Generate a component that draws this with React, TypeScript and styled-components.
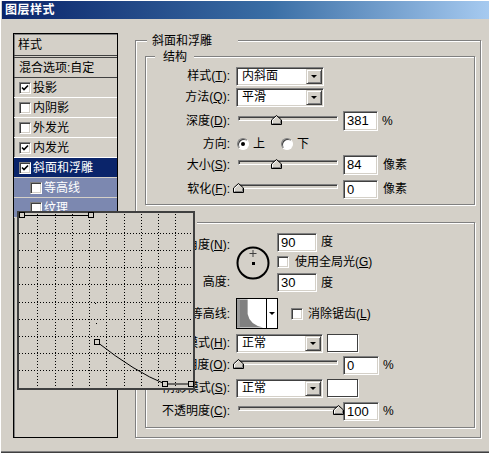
import React from 'react'
import styled, { createGlobalStyle } from 'styled-components'

const FONT = `'Liberation Sans', 'Noto Sans CJK SC', sans-serif`

const GlobalStyle = createGlobalStyle`
  html, body {
    margin: 0;
    padding: 0;
    background: #d4d0c8;
  }
  body {
    font-family: ${FONT};
    font-size: 12px;
    color: #000;
  }
`

const Window = styled.div`
  position: relative;
  width: 489px;
  height: 453px;
  box-sizing: border-box;
  padding: 1px 0 0 2px;
  background: #d4d0c8;
  overflow: hidden;
  box-shadow: inset 1px 1px 0 #fff, inset 0 -1px 0 #404040, inset 0 -2px 0 #808080;
`

const TitleBar = styled.div`
  height: 18px;
  padding-left: 3px;
  background: linear-gradient(to right, #0a246a 0%, #3a6ea5 55%, #a6caf0 100%);
  color: #fff;
  font-weight: bold;
  font-size: 12px;
  letter-spacing: 0.5px;
  line-height: 18px;
`

const Body = styled.div`
  display: flex;
  align-items: flex-start;
  padding: 14px 0 0 11px;
`

/* ---------- left style list ---------- */

const ListBox = styled.div`
  width: 105px;
  height: 405px;
  flex: none;
  box-sizing: border-box;
  border: 1px solid #000;
  box-shadow: inset 1px 1px 0 #808080;
  overflow: hidden;
`

const ListHeader = styled.div`
  height: 21px;
  padding-left: 4px;
  line-height: 22px;
  border-bottom: 3px double #404040;
`

type ItemKind = 'plain' | 'selected' | 'sub'

const ListItem = styled.div<{ $kind: ItemKind; $dark?: boolean }>`
  display: flex;
  align-items: center;
  gap: 2px;
  height: 19px;
  padding-left: ${p => (p.$kind === 'sub' ? 16 : 5)}px;
  border-bottom: 1px solid ${p => (p.$dark ? '#404040' : p.$kind === 'plain' ? '#fff' : '#d4d0c8')};
  background: ${p => (p.$kind === 'selected' ? '#0a246a' : p.$kind === 'sub' ? '#7c88b0' : 'transparent')};
  color: ${p => (p.$kind === 'plain' ? '#000' : '#fff')};
  white-space: nowrap;
  line-height: 14px;
`

const ListText = styled.span<{ $pad?: number }>`
  padding-left: ${p => p.$pad ?? 0}px;
`

/* ---------- common win controls ---------- */

const Box = styled.span`
  display: inline-flex;
  align-items: center;
  justify-content: center;
  width: 12px;
  height: 12px;
  flex: none;
  box-sizing: border-box;
  background: #fff;
  border: 1px solid;
  border-color: #808080 #fff #fff #808080;
  box-shadow: inset 1px 1px 0 #404040, inset -1px -1px 0 #d4d0c8;
`

const Check = ({ on }: { on?: boolean }) => (
  <Box>
    {on && (
      <svg width="8" height="8" viewBox="0 0 8 8">
        <path d="M1 3.5 L3 5.5 L7 1.5" stroke="#000" strokeWidth="1.6" fill="none" />
      </svg>
    )}
  </Box>
)

const RadioDot = styled.span<{ $on?: boolean }>`
  position: relative;
  width: 12px;
  height: 12px;
  flex: none;
  box-sizing: border-box;
  border-radius: 50%;
  background: #fff;
  border: 1px solid;
  border-color: #808080 #fff #fff #808080;
  box-shadow: inset 1px 1px 0 #404040;
  &::after {
    content: '';
    display: ${p => (p.$on ? 'block' : 'none')};
    position: absolute;
    left: 3px;
    top: 3px;
    width: 4px;
    height: 4px;
    border-radius: 50%;
    background: #000;
  }
`

const Field = styled.div<{ $w: number; $h?: number }>`
  width: ${p => p.$w}px;
  height: ${p => p.$h ?? 19}px;
  flex: none;
  box-sizing: border-box;
  padding-left: 3px;
  background: #fff;
  border: 1px solid;
  border-color: #808080 #fff #fff #808080;
  box-shadow: inset 1px 1px 0 #404040, inset -1px -1px 0 #d4d0c8;
  font-size: 13px;
  line-height: ${p => (p.$h ?? 19) - 2}px;
`

const SelectBox = styled.div<{ $w: number; $ml: number }>`
  display: flex;
  align-items: center;
  width: ${p => p.$w}px;
  height: 19px;
  margin-left: ${p => p.$ml}px;
  flex: none;
  box-sizing: border-box;
  padding: 1px 1px 1px 5px;
  background: #fff;
  border: 1px solid;
  border-color: #808080 #fff #fff #808080;
  box-shadow: inset 1px 1px 0 #404040, inset -1px -1px 0 #d4d0c8;
  line-height: 14px;
`

const SelectText = styled.span`
  flex: 1;
`

const DropBtn = styled.span<{ $w?: number }>`
  display: flex;
  align-items: center;
  justify-content: center;
  width: ${p => p.$w ?? 16}px;
  height: 100%;
  flex: none;
  box-sizing: border-box;
  background: #d4d0c8;
  border: 1px solid;
  border-color: #d4d0c8 #404040 #404040 #d4d0c8;
  box-shadow: inset 1px 1px 0 #fff, inset -1px -1px 0 #808080;
  &::after {
    content: '';
    border-left: 3px solid transparent;
    border-right: 3px solid transparent;
    border-top: 3px solid #000;
    margin-top: 1px;
  }
`

const Select = ({ text, w, ml }: { text: string; w: number; ml: number }) => (
  <SelectBox $w={w} $ml={ml}>
    <SelectText>{text}</SelectText>
    <DropBtn />
  </SelectBox>
)

const SliderWrap = styled.div`
  position: relative;
  width: 100px;
  height: 14px;
  margin: 0 5px 0 3px;
  flex: none;
`

const Track = styled.div`
  position: absolute;
  left: 0;
  right: 0;
  top: 2px;
  height: 5px;
  box-sizing: border-box;
  background: #d4d0c8;
  border: 1px solid;
  border-color: #808080 #fff #fff #808080;
  box-shadow: inset 1px 1px 0 #404040;
`

const Thumb = styled.svg`
  position: absolute;
  top: 1px;
  margin-left: -5px;
`

const Slider = ({ pos }: { pos: number }) => (
  <SliderWrap>
    <Track />
    <Thumb width="11" height="10" viewBox="0 0 11 10" style={{ left: `${pos}%` }}>
      <polygon points="0.5,9.5 0.5,5 5.5,0.5 10.5,5 10.5,9.5" fill="#d4d0c8" stroke="#000" />
      <polyline points="1.5,9 1.5,5.4 5.5,1.8" fill="none" stroke="#fff" />
      <polyline points="9.5,5.4 9.5,8.5 1.5,8.5" fill="none" stroke="#808080" />
    </Thumb>
  </SliderWrap>
)

const Unit = styled.span<{ $ml?: number }>`
  margin-left: ${p => p.$ml ?? 4}px;
  line-height: 14px;
  white-space: nowrap;
`

/* ---------- group boxes ---------- */

const Group = styled.div<{ $w: number; $h: number }>`
  position: relative;
  width: ${p => p.$w}px;
  height: ${p => p.$h}px;
  flex: none;
  box-sizing: border-box;
  border: 1px solid #808080;
  box-shadow: inset 1px 1px 0 #fff, 1px 1px 0 #fff;
`

const OuterGroup = styled(Group)`
  display: flex;
  flex-direction: column;
  gap: 17px;
  margin: 7px 0 0 17px;
  padding: 15px 5px 9px 9px;
`

const Legend = styled.div<{ $left: number; $pl: number; $pr: number }>`
  position: absolute;
  top: -7px;
  left: ${p => p.$left}px;
  padding: 0 ${p => p.$pr}px 0 ${p => p.$pl}px;
  background: #d4d0c8;
  line-height: 14px;
  white-space: nowrap;
`

const InnerGroup = styled(Group)`
  padding-top: 9px;
`

const Row = styled.div<{ $h: number }>`
  display: flex;
  align-items: center;
  height: ${p => p.$h}px;
`

const Label = styled.div`
  width: 84px;
  flex: none;
  text-align: right;
  line-height: 14px;
  white-space: nowrap;
`

const Gap = styled.span<{ $w: number }>`
  display: inline-block;
  width: ${p => p.$w}px;
  flex: none;
`

const Key = ({ k }: { k: string }) => <u>{k}</u>

/* ---------- angle block ---------- */

const AngleBlock = styled.div`
  display: flex;
  height: 62px;
`

const AngleLabels = styled.div`
  display: flex;
  flex-direction: column;
  gap: 23px;
  padding-top: 6px;
`

const Dial = styled.svg`
  margin: 14px 0 0 6px;
  flex: none;
`

const AngleControls = styled.div`
  display: flex;
  flex-direction: column;
  margin-left: 7px;
`

const ContourPicker = styled.div`
  display: flex;
  width: 42px;
  height: 31px;
  margin-left: 6px;
  flex: none;
  box-sizing: border-box;
  border: 1px solid #000;
  background: #fff;
`

const ContourPreview = styled.svg`
  flex: 1;
  border-right: 1px solid #000;
`

const ContourDrop = styled.span`
  display: flex;
  align-items: center;
  justify-content: center;
  width: 10px;
  background: #fff;
  &::after {
    content: '';
    border-left: 3px solid transparent;
    border-right: 3px solid transparent;
    border-top: 3px solid #000;
  }
`

const Swatch = styled.div`
  width: 31px;
  height: 18px;
  margin-left: 4px;
  box-sizing: border-box;
  background: #fff;
  border: 1px solid #404040;
  box-shadow: 1px 1px 0 #fff;
`

/* ---------- contour popup ---------- */

const CurvePopup = styled.div`
  position: absolute;
  left: 17px;
  top: 211px;
  width: 178px;
  height: 179px;
  box-sizing: border-box;
  border: 1px solid #404040;
  box-shadow: inset 1px 1px 0 #404040, inset -1px -1px 0 #404040;
  background: #d4d0c8;
`

const gridX = Array.from({ length: 9 }, (_, i) => 20 + 17.25 * (i + 1))
const gridY = Array.from({ length: 9 }, (_, i) => 216 + 17.1 * (i + 1))
const handles: [number, number][] = [
  [22, 215],
  [91, 215],
  [97, 342],
  [165, 384],
  [191, 384],
]

const CurveGraph = () => (
  <svg width="176" height="177" viewBox="18 212 176 177">
    {gridX.map(x => (
      <line key={`x${x}`} x1={Math.round(x) + 0.5} y1={214} x2={Math.round(x) + 0.5} y2={388} stroke="#000" strokeDasharray="1 2" />
    ))}
    {gridY.map(y => (
      <line key={`y${y}`} x1={19} y1={Math.round(y) + 0.5} x2={193} y2={Math.round(y) + 0.5} stroke="#000" strokeDasharray="1 2" />
    ))}
    <path d="M22 215.5 H91" stroke="#000" fill="none" />
    <path d="M97 342 Q135 372 165 384 H191" stroke="#000" fill="none" />
    <rect x="94" y="250" width="1" height="1" fill="#000" />
    <rect x="95" y="303" width="1" height="1" fill="#000" />
    <rect x="96" y="323" width="1" height="1" fill="#000" />
    {handles.map(([x, y]) => (
      <rect key={`${x}-${y}`} x={x - 2.5} y={y - 2.5} width="5" height="5" fill="#d4d0c8" stroke="#000" />
    ))}
  </svg>
)

export default function App() {
  return (
    <Window>
      <GlobalStyle />
      <TitleBar>图层样式</TitleBar>
      <Body>
        <ListBox>
          <ListHeader>样式</ListHeader>
          <ListItem $kind="plain" $dark>
            <ListText>混合选项:自定</ListText>
          </ListItem>
          <ListItem $kind="plain">
            <Check on />
            <ListText>投影</ListText>
          </ListItem>
          <ListItem $kind="plain">
            <Check />
            <ListText>内阴影</ListText>
          </ListItem>
          <ListItem $kind="plain">
            <Check />
            <ListText>外发光</ListText>
          </ListItem>
          <ListItem $kind="plain">
            <Check on />
            <ListText>内发光</ListText>
          </ListItem>
          <ListItem $kind="selected">
            <Check on />
            <ListText>斜面和浮雕</ListText>
          </ListItem>
          <ListItem $kind="sub">
            <Check />
            <ListText>等高线</ListText>
          </ListItem>
          <ListItem $kind="sub">
            <Check />
            <ListText>纹理</ListText>
          </ListItem>
        </ListBox>

        <OuterGroup $w={346} $h={398}>
          <Legend $left={11} $pl={5} $pr={26}>斜面和浮雕</Legend>

          <InnerGroup $w={330} $h={149}>
            <Legend $left={9} $pl={8} $pr={7}>结构</Legend>
            <Row $h={20}>
              <Label>样式(<Key k="T" />):</Label>
              <Select text="内斜面" w={88} ml={6} />
            </Row>
            <Row $h={22}>
              <Label>方法(<Key k="Q" />):</Label>
              <Select text="平滑" w={88} ml={6} />
            </Row>
            <Row $h={26}>
              <Label>深度(<Key k="D" />):</Label>
              <Gap $w={5} />
              <Slider pos={38} />
              <Field $w={35} $h={20}>381</Field>
              <Unit>%</Unit>
            </Row>
            <Row $h={20}>
              <Label>方向:</Label>
              <Gap $w={7} />
              <RadioDot $on />
              <Unit $ml={4}>上</Unit>
              <Gap $w={16} />
              <RadioDot />
              <Unit $ml={4}>下</Unit>
            </Row>
            <Row $h={22}>
              <Label>大小(<Key k="S" />):</Label>
              <Gap $w={5} />
              <Slider pos={38} />
              <Field $w={35} $h={20}>84</Field>
              <Unit $ml={5}>像素</Unit>
            </Row>
            <Row $h={26}>
              <Label>软化(<Key k="F" />):</Label>
              <Gap $w={5} />
              <Slider pos={0} />
              <Field $w={35} $h={19}>0</Field>
              <Unit $ml={5}>像素</Unit>
            </Row>
          </InnerGroup>

          <InnerGroup $w={330} $h={206}>
            <Legend $left={9} $pl={8} $pr={10}>阴影</Legend>
            <AngleBlock>
              <AngleLabels>
                <Label>角度(<Key k="N" />):</Label>
                <Label>高度:</Label>
              </AngleLabels>
              <Dial width="34" height="34" viewBox="0 0 34 34">
                <circle cx="17" cy="17" r="15.5" fill="none" stroke="#000" strokeWidth="2" />
                <path d="M17 4 V11 M13.5 7.5 H20.5" stroke="#404040" strokeWidth="1" />
                <rect x="16" y="16" width="3" height="3" fill="#000" />
              </Dial>
              <AngleControls>
                <Row $h={20}>
                  <Field $w={40}>90</Field>
                  <Unit>度</Unit>
                </Row>
                <Row $h={20}>
                  <Check />
                  <Unit $ml={6}>
                    使用全局光(<Key k="G" />)
                  </Unit>
                </Row>
                <Row $h={21}>
                  <Field $w={40}>30</Field>
                  <Unit>度</Unit>
                </Row>
              </AngleControls>
            </AngleBlock>
            <Row $h={39}>
              <Label>光泽等高线:</Label>
              <ContourPicker>
                <ContourPreview width="30" height="29" viewBox="0 0 30 29">
                  <rect width="30" height="29" fill="#fff" />
                  <path d="M0 0 H11 V15 Q13 26 27 29 H0 Z" fill="#808080" />
                  <path d="M0 0 H3 V29 H0 Z" fill="#9a9a9a" />
                </ContourPreview>
                <ContourDrop />
              </ContourPicker>
              <Gap $w={13} />
              <Check />
              <Unit $ml={5}>
                消除锯齿(<Key k="L" />)
              </Unit>
            </Row>
            <Row $h={20}>
              <Label>高光模式(<Key k="H" />):</Label>
              <Select text="正常" w={87} ml={6} />
              <Swatch />
            </Row>
            <Row $h={24}>
              <Label>不透明度(<Key k="O" />):</Label>
              <Gap $w={5} />
              <Slider pos={0} />
              <Field $w={36}>0</Field>
              <Unit>%</Unit>
            </Row>
            <Row $h={22}>
              <Label>阴影模式(<Key k="S" />):</Label>
              <Select text="正常" w={87} ml={6} />
              <Swatch />
            </Row>
            <Row $h={24}>
              <Label>不透明度(<Key k="C" />):</Label>
              <Gap $w={5} />
              <Slider pos={100} />
              <Field $w={36}>100</Field>
              <Unit>%</Unit>
            </Row>
          </InnerGroup>
        </OuterGroup>
      </Body>

      <CurvePopup>
        <CurveGraph />
      </CurvePopup>
    </Window>
  )
}
